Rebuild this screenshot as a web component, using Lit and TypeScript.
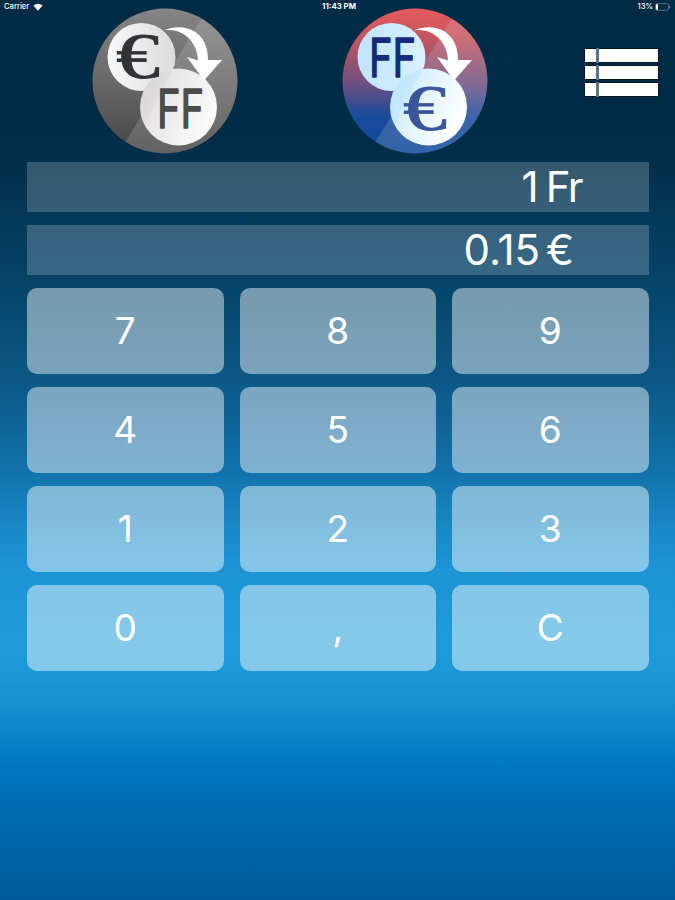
import { LitElement, html, svg, css } from "lit";
import { customElement, property } from "lit/decorators.js";

@customElement("convert-badge")
class ConvertBadge extends LitElement {
  @property() mode = "grey";
  static styles = css`
    :host { display: block; width: 146px; height: 146px; }
    svg { display: block; }
    .euro { font: 400 66px "Liberation Serif", serif; }
    .franc { font: 400 53px Inter, sans-serif; stroke-linejoin: round; }
  `;
  private euro(x: number, y: number, c: string) {
    return svg`<text class="euro" x=${x} y=${y} fill=${c} stroke=${c} stroke-width=".8" textLength="44" lengthAdjust="spacingAndGlyphs">€</text>`;
  }
  private franc(x: number, y: number, c: string) {
    return svg`<text class="franc" x=${x} y=${y} fill=${c} stroke=${c} stroke-width="1.4" textLength="47" lengthAdjust="spacingAndGlyphs">FF</text>`;
  }
  render() {
    const grey = this.mode === "grey";
    return html`<svg width="146" height="146" viewBox="0 0 146 146">
      <defs>
        <linearGradient id="disc" x1="0" y1="0" x2="0" y2="1">
          ${grey
            ? svg`<stop offset="0" stop-color="#858585"/><stop offset=".5" stop-color="#686868"/><stop offset="1" stop-color="#464646"/>`
            : svg`<stop offset="0" stop-color="#e55a5d"/><stop offset=".2" stop-color="#c4565f"/><stop offset=".5" stop-color="#73507e"/><stop offset=".75" stop-color="#184b9c"/><stop offset="1" stop-color="#10489a"/>`}
        </linearGradient>
        <linearGradient id="small" x1="0" y1="0" x2="1" y2="0">
          <stop offset="0" stop-color=${grey ? "#f8f8f8" : "#bfe5ff"}/>
          <stop offset="1" stop-color=${grey ? "#dcdcdc" : "#daf0ff"}/>
        </linearGradient>
        <linearGradient id="large" x1="0" y1="0" x2="1" y2=".5">
          <stop offset="0" stop-color=${grey ? "#d4d4d4" : "#b8e2ff"}/>
          <stop offset=".33" stop-color=${grey ? "#dedede" : "#c8e9ff"}/>
          <stop offset=".36" stop-color=${grey ? "#e6e6e6" : "#d8f0ff"}/>
          <stop offset="1" stop-color=${grey ? "#fafafa" : "#ffffff"}/>
        </linearGradient>
        <clipPath id="round"><circle cx="73" cy="73" r="72.5"/></clipPath>
      </defs>
      <circle cx="73" cy="73" r="72.5" fill="url(#disc)"/>
      <path d="M116 0 L26 146 H146 V0Z" fill="#fff" opacity=".15" clip-path="url(#round)"/>
      <circle cx="49.5" cy="49" r="34" fill="url(#small)"/>
      <circle cx="86.5" cy="99" r="38.5" fill="url(#large)"/>
      <path d="M72 22.5 C88 15 109 20 114.5 40 Q116 46 116 52 L130 52 L112 72.5 L95 49 L106 52.5 C106 36 92 19 72 22.5Z" fill="#fff"/>
      ${grey
        ? [this.euro(24, 70, "#303236"), this.franc(65, 120, "#4b4b4b")]
        : [this.franc(27, 68.5, "#142a7c"), this.euro(61, 122, "#3b559b")]}
    </svg>`;
  }
}

@customElement("app-root")
class AppRoot extends LitElement {
  static styles = css`
    :host {
      display: flex; flex-direction: column; box-sizing: border-box;
      width: 675px; height: 900px; overflow: hidden; color: #fff;
      font-family: Inter, "Liberation Sans", sans-serif;
      background: linear-gradient(#002b44 0, #002b45 120px, #03304b 170px, #043b5d 230px, #06456a 290px, #0b5682 370px, #0f659a 430px, #1479b3 490px, #1989c7 530px, #1e94d5 570px, #1d9bd9 650px, #1a97d5 680px, #128cce 715px, #0077c0 765px, #006fb6 800px, #0065a6 846px, #005a97 900px);
    }
    .status { display: grid; grid-template-columns: 1fr auto 1fr; height: 9px; padding: 2px 4px 0; box-sizing: content-box; align-items: center; font: 500 7.6px/9px Inter, sans-serif; }
    .carrier, .power { display: flex; align-items: center; gap: 4px; }
    .power { justify-content: flex-end; gap: 2px; }
    .time { font-weight: 700; font-size: 7.8px; padding-left: 3px; }
    header { display: grid; grid-template-columns: 146px 146px 75px; column-gap: 104px; padding-left: 92px; height: 151px; margin-top: -3px; flex: none; }
    header > :last-child { margin: 40px 0 0 -8px; }
    .field { flex: none; display: flex; justify-content: flex-end; box-sizing: border-box; height: 50px; margin: 0 26px 13px 27px; background: rgba(255,255,255,.2); font-size: 42px; line-height: 50px; white-space: pre; }
    .field.franc { margin-top: 3px; padding-right: 67px; }
    .field.euro { padding-right: 75px; }
    .unit { margin-left: 6px; }
    .franc .unit { letter-spacing: -1.5px; margin-left: 7px; }
    .keys { display: grid; grid-template-columns: repeat(3, 196.5px); grid-auto-rows: 86px; gap: 13px 16px; margin-left: 27px; }
    button { border: 0; padding: 0; border-radius: 10px; background: rgba(255,255,255,.46); color: #fff; font: 400 37px/86px Inter, sans-serif; }
  `;
  render() {
    return html`
      <div class="status">
        <div class="carrier"><span>Carrier</span><svg width="10" height="8" viewBox="0 0 10 8"><path d="M.4 2.5 Q5-1.2 9.6 2.5L5 7.7Z" fill="#fff"/></svg></div>
        <span class="time">11:43 PM</span>
        <div class="power"><span>13%</span><svg width="16" height="8" viewBox="0 0 16 8"><rect x=".5" y=".7" width="13" height="6.6" rx="1.3" fill="none" stroke="#748c9b" stroke-width=".7"/><path d="M1 1.3h2v5.4H1z" fill="#fff"/><path d="M14.6 2.8v2.4" stroke="#748c9b"/></svg></div>
      </div>
      <header>
        <convert-badge mode="grey"></convert-badge>
        <convert-badge mode="colour"></convert-badge>
        <svg width="75" height="52" viewBox="0 0 75 52">${[1, 18, 35].map(y => svg`<rect x="0" y=${y - 1} width="75" height="15" fill="#001626"/><rect x="1" y=${y} width="73" height="13" fill="#fff"/><rect x="12" y=${y - 1} width="3" height="15" fill="#5d7383"/>`)}</svg>
      </header>
      <div class="field franc"><span>1</span><span class="unit">Fr</span></div>
      <div class="field euro"><span>0.15</span><span class="unit">€</span></div>
      <div class="keys">${["7", "8", "9", "4", "5", "6", "1", "2", "3", "0", ",", "C"].map(k => html`<button>${k}</button>`)}</div>`;
  }
}
